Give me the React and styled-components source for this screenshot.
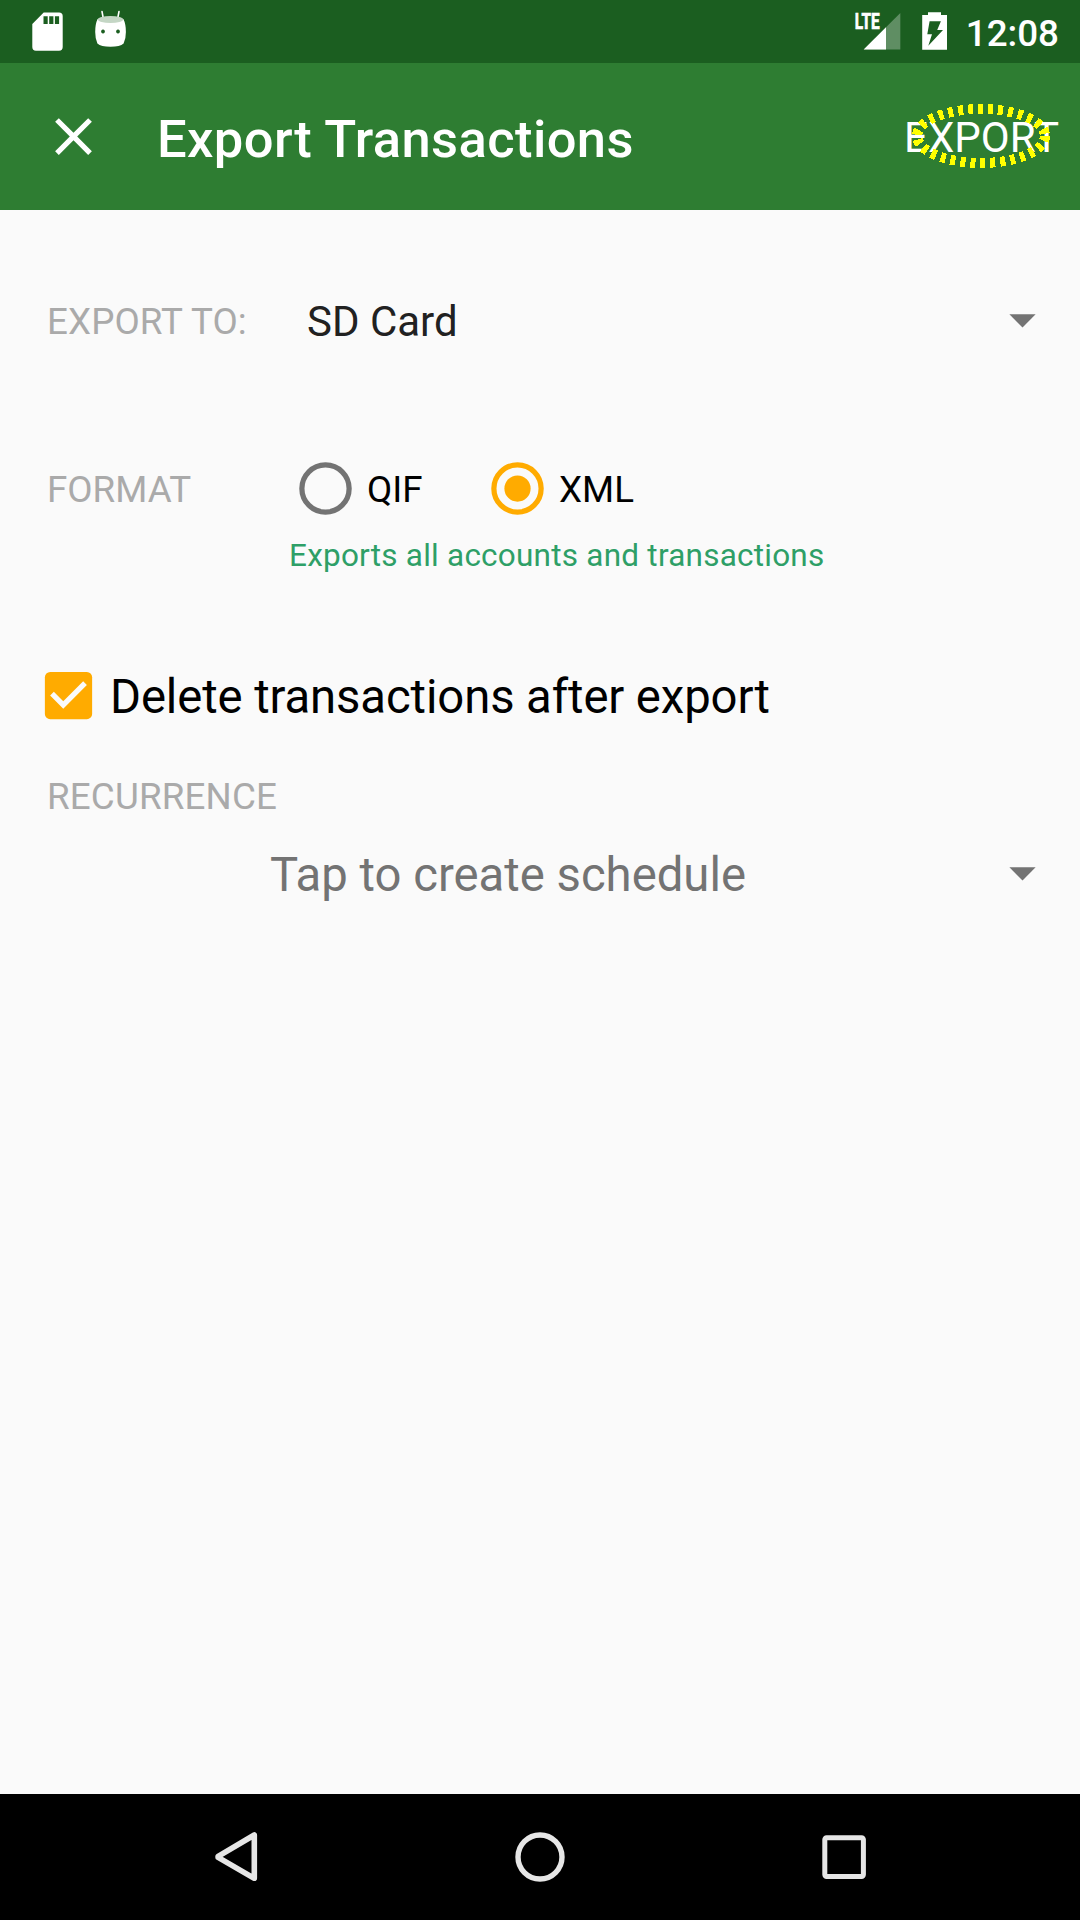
import React from "react";
import styled, { createGlobalStyle } from "styled-components";

const GlobalStyle = createGlobalStyle`
  * { box-sizing: border-box; }
  body { margin: 0; background: #fafafa; }
`;

const Screen = styled.div`
  display: flex;
  flex-direction: column;
  width: 1080px;
  height: 1920px;
  overflow: hidden;
  background: #fafafa;
  font-family: Roboto, "Liberation Sans", sans-serif;
  white-space: nowrap;
`;

const StatusBar = styled.header`
  display: flex;
  justify-content: space-between;
  flex: 0 0 63px;
  padding: 0 21px 0 32px;
  background: #1b5e20;
  color: #fff;
`;

const StatusGroup = styled.div`
  display: flex;
  align-items: flex-start;
`;

const StatusIcon = styled.svg`
  display: block;
  flex: none;
  margin-left: ${(p) => p.$gap || 0}px;
`;

const Clock = styled.span`
  margin-left: 17px;
  padding-top: 12px;
  font-size: 36.75px;
  font-weight: 500;
  line-height: 44px;
`;

const Toolbar = styled.div`
  display: flex;
  align-items: center;
  flex: 0 0 147px;
  padding: 0 21px 0 42px;
  background: #2e7d32;
  color: #fff;
`;

const IconButton = styled.button`
  display: flex;
  width: 63px;
  height: 63px;
  padding: 0;
  border: 0;
  background: none;
  color: inherit;
`;

const Title = styled.h1`
  flex: 1;
  margin: 0 0 0 52px;
  padding-top: 5px;
  font-size: 52.5px;
  font-weight: 500;
  letter-spacing: 0.39px;
  line-height: 62px;
`;

const ExportButton = styled.button`
  position: relative;
  padding: 3px 0 0;
  border: 0;
  background: none;
  color: inherit;
  font: 400 42px/50px Roboto, "Liberation Sans", sans-serif;
`;

const Highlight = styled.svg`
  position: absolute;
  right: 7px;
  top: -10px;
`;

const Form = styled.main`
  display: flex;
  flex-direction: column;
  flex: 1;
  padding: 67px 26px 0 47px;
`;

const Row = styled.div`
  display: flex;
  align-items: center;
  height: ${(p) => p.$height}px;
  margin-top: ${(p) => p.$gap || 0}px;
`;

const Label = styled.span`
  width: ${(p) => p.$width || "auto"};
  padding-top: ${(p) => p.$drop || 0}px;
  color: #aaa;
  font-size: 36.75px;
  letter-spacing: ${(p) => p.$tracking || 0}px;
  line-height: 44px;
`;

const Select = styled.div`
  display: flex;
  flex: 1;
  align-items: center;
  justify-content: space-between;
  padding-left: ${(p) => p.$indent || 0}px;
  color: ${(p) => (p.$muted ? "#737373" : "#212121")};
  font-size: ${(p) => (p.$muted ? 47.25 : 42)}px;
  line-height: 56px;
`;

const Value = styled.span`
  padding-top: ${(p) => p.$drop || 0}px;
`;

const Glyph = styled.svg`
  display: block;
  flex: none;
  width: 63px;
  height: 63px;
`;

const Option = styled.label`
  display: flex;
  align-items: center;
  gap: 10.5px;
  width: ${(p) => p.$width || "auto"};
  color: #000;
  font-size: 36.75px;
  line-height: 44px;
`;

const OptionText = styled.span`
  padding-top: 3px;
`;

const Hint = styled.p`
  margin: 6.5px 0 0 242px;
  color: #2e9f67;
  font-size: 31.5px;
  letter-spacing: 0.23px;
  line-height: 38px;
`;

const CheckRow = styled.label`
  display: flex;
  align-items: center;
  gap: 10.5px;
  height: 84px;
  margin: 78.5px 0 0 -10.5px;
  color: #000;
  font-size: 47.25px;
  letter-spacing: -0.1px;
  line-height: 56px;
`;

const CheckText = styled.span`
  padding-top: 4px;
`;

const NavBar = styled.nav`
  display: flex;
  justify-content: center;
  flex: 0 0 126px;
  background: #000;
`;

const NavKey = styled.button`
  display: flex;
  align-items: center;
  justify-content: center;
  width: 304px;
  padding: 0;
  border: 0;
  background: none;
`;

const Caret = () => (
  <Glyph viewBox="0 0 24 24" fill="#737373">
    <path d="M7 10l5 5 5-5z" />
  </Glyph>
);

const Radio = ({ checked }) => {
  const color = checked ? "#ffab00" : "#737373";
  return (
    <Glyph viewBox="0 0 24 24" fill="none">
      <circle cx="12" cy="12" r="9" stroke={color} strokeWidth="2" />
      {checked && <circle cx="12" cy="12" r="5" fill={color} />}
    </Glyph>
  );
};

export default function App() {
  return (
    <>
      <GlobalStyle />
      <Screen>
        <StatusBar>
          <StatusGroup>
            <StatusIcon width="32" height="63" viewBox="32 0 32 63">
              <path
                fill="#fff"
                fillRule="evenodd"
                d="M43.7 12.5H59Q62.7 12.5 62.7 16V47Q62.7 50.7 59 50.7H36Q32.3 50.7 32.3 47V24ZM43.5 16.3V24H47.7V16.3ZM49.2 16.3V24H53.4V16.3ZM54.9 16.3V24H59.1V16.3Z"
              />
            </StatusIcon>
            <StatusIcon $gap={30} width="34" height="63" viewBox="94 0 34 63">
              <path d="M102 11.5l1.3 7M119 11.5l-1.3 7" stroke="#fff" strokeWidth="1.6" strokeLinecap="round" />
              <path
                fill="#fff"
                fillRule="evenodd"
                d="M97.6 19Q110.5 15 123.4 19Q125.9 24 125.9 32Q125.9 39 123.6 43.5Q120 46.7 110.5 46.7Q101 46.7 97.4 43.5Q95.2 39 95.2 32Q95.2 24 97.6 19ZM103 29.6a1.9 1.9 0 1 0 .01 0ZM118 29.6a1.9 1.9 0 1 0 .01 0Z"
              />
              <ellipse cx="110.5" cy="19.5" rx="12.7" ry="3.5" fill="#c4d6c5" />
            </StatusIcon>
          </StatusGroup>
          <StatusGroup>
            <StatusIcon width="48" height="63" viewBox="854 0 48 63">
              <path d="M863.7 49.5L900.3 13V49.5Z" fill="#fff" fillOpacity="0.3" />
              <path d="M863.7 49.5L886 27.3V49.5Z" fill="#fff" />
              <text
                x="854.8"
                y="28.8"
                fill="#fff"
                stroke="#fff"
                strokeWidth="0.7"
                fontSize="21.3"
                fontWeight="700"
                textLength="24.8"
                lengthAdjust="spacingAndGlyphs"
              >
                LTE
              </text>
            </StatusIcon>
            <StatusIcon $gap={19} width="28" height="63" viewBox="921 0 28 63">
              <path
                fill="#fff"
                fillRule="evenodd"
                d="M928 12.3H941V15H947V49.7H922.2V15H928ZM929.6 21.3L927.3 34.3H932L928.3 45.7L943 30H937.2L940.9 21.3Z"
              />
            </StatusIcon>
            <Clock>12:08</Clock>
          </StatusGroup>
        </StatusBar>

        <Toolbar>
          <IconButton aria-label="Close">
            <Glyph viewBox="0 0 24 24" fill="currentColor">
              <path d="M19 6.41L17.59 5 12 10.59 6.41 5 5 6.41 10.59 12 5 17.59 6.41 19 12 13.41 17.59 19 19 17.59 13.41 12z" />
            </Glyph>
          </IconButton>
          <Title>Export Transactions</Title>
          <ExportButton>
            EXPORT
            <Highlight width="144" height="72" viewBox="908 100 144 72">
              <ellipse
                cx="981"
                cy="136"
                rx="64"
                ry="27"
                fill="none"
                stroke="#ff0"
                strokeWidth="10"
                strokeDasharray="5 5"
                shapeRendering="crispEdges"
              />
            </Highlight>
          </ExportButton>
        </Toolbar>

        <Form>
          <Row $height={84}>
            <Label $width="260px" $drop={5} $tracking={0.1}>EXPORT TO:</Label>
            <Select>
              <Value $drop={5}>SD Card</Value>
              <Caret />
            </Select>
          </Row>
          <Row $height={84} $gap={85}>
            <Label $width="246.5px" $drop={3}>FORMAT</Label>
            <Option $width="192px">
              <Radio />
              <OptionText>QIF</OptionText>
            </Option>
            <Option>
              <Radio checked />
              <OptionText>XML</OptionText>
            </Option>
          </Row>
          <Hint>Exports all accounts and transactions</Hint>
          <CheckRow>
            <Glyph viewBox="0 0 24 24">
              <rect x="3" y="3" width="18" height="18" rx="2" fill="#ffab00" />
              <path fill="#fafafa" d="M10 17l-5-5 1.41-1.41L10 14.17l7.59-7.59L19 8z" />
            </Glyph>
            <CheckText>Delete transactions after export</CheckText>
          </CheckRow>
          <Row $height={44} $gap={37.5}>
            <Label $tracking={0.16}>RECURRENCE</Label>
          </Row>
          <Row $height={84} $gap={11.5}>
            <Select $muted $indent={223}>
              <Value $drop={6}>Tap to create schedule</Value>
              <Caret />
            </Select>
          </Row>
        </Form>

        <NavBar>
          <NavKey aria-label="Back">
            <svg width="50" height="56" viewBox="211 1829 50 56">
              <path
                d="M254.3 1835V1878.3L218.1 1857.4V1856.3Z"
                fill="none"
                stroke="#e6e6e6"
                strokeWidth="5.6"
                strokeLinejoin="round"
              />
            </svg>
          </NavKey>
          <NavKey aria-label="Home">
            <svg width="56" height="56">
              <circle cx="28" cy="28" r="22" fill="none" stroke="#e6e6e6" strokeWidth="5.4" />
            </svg>
          </NavKey>
          <NavKey aria-label="Recent apps">
            <svg width="56" height="56">
              <rect x="8.8" y="8.8" width="38.6" height="38.6" rx="1.8" fill="none" stroke="#e6e6e6" strokeWidth="5" />
            </svg>
          </NavKey>
        </NavBar>
      </Screen>
    </>
  );
}
